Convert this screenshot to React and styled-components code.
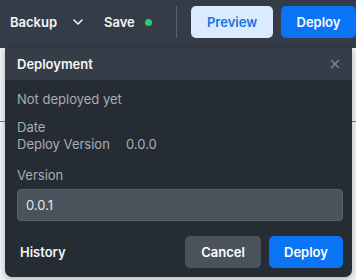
import styled, { createGlobalStyle } from "styled-components";

const Global = createGlobalStyle`
  html, body {
    margin: 0;
    padding: 0;
    width: 356px;
    height: 280px;
    overflow: hidden;
    background: #e9edf2;
    font-family: "Inter", "Liberation Sans", sans-serif;
  }
  * { box-sizing: border-box; }
`;

const Page = styled.div`
  position: relative;
  width: 356px;
  height: 280px;
  display: flex;
  flex-direction: column;
`;

const Toolbar = styled.div`
  height: 48px;
  background: #333c47;
  display: flex;
  align-items: center;
  padding: 0 1px 4px 10px;
  color: #f3f5f7;
  font-size: 13px;
  font-weight: 600;
`;

const Menu = styled.div`
  display: flex;
  align-items: center;
  gap: 16px;
  width: 94px;
  flex-shrink: 0;
`;

const Save = styled.div`
  display: flex;
  align-items: center;
  gap: 10px;
  width: 72px;
  flex-shrink: 0;
`;

const Dot = styled.span`
  width: 7px;
  height: 7px;
  border-radius: 50%;
  background: #2ecc71;
`;

const Divider = styled.div`
  width: 1px;
  height: 32px;
  background: #5b636d;
  margin-right: 14px;
  flex-shrink: 0;
`;

const Button = styled.button`
  height: 32px;
  width: ${({ $w }) => $w}px;
  flex-shrink: 0;
  border: none;
  border-radius: 5px;
  font-family: inherit;
  font-size: 13px;
  font-weight: 600;
  cursor: pointer;
  background: ${({ $kind }) =>
    $kind === "light" ? "#dbeafc" : $kind === "grey" ? "#4a525c" : "#0b74f4"};
  color: ${({ $kind }) => ($kind === "light" ? "#1673e6" : "#ffffff")};
`;

const ToolButtons = styled.div`
  display: flex;
  gap: 8px;
`;

const Content = styled.div`
  flex: 1;
  background: #eef1f5;
  display: flex;
  flex-direction: column;
`;

const TabLine = styled.div`
  margin-top: 73px;
  height: 1px;
  background: #3b82f6;
`;

const Popover = styled.div`
  position: absolute;
  left: 5px;
  top: 48px;
  width: 347px;
  height: 229px;
  background: #262c34;
  border-radius: 0 0 7px 7px;
  overflow: hidden;
  display: flex;
  flex-direction: column;
  box-shadow: 0 2px 6px rgba(0, 0, 0, 0.25);
`;

const Header = styled.div`
  height: 32px;
  background: #343d48;
  display: flex;
  align-items: center;
  justify-content: space-between;
  padding: 0 12px;
  color: #f3f5f7;
  font-size: 13px;
  font-weight: 600;
`;

const Body = styled.div`
  padding: 11px 9px 0 12px;
  display: flex;
  flex-direction: column;
  color: #a9aeb5;
  font-size: 13px;
`;

const Line = styled.div`
  height: 17px;
  line-height: 17px;
  margin-top: ${({ $mt }) => $mt || 0}px;
  display: flex;
`;

const Key = styled.span`
  width: 109px;
`;

const Input = styled.div`
  margin-top: 5px;
  height: 32px;
  border: 1px solid #59616b;
  border-radius: 4px;
  background: #4a525c;
  color: #e4e7ea;
  display: flex;
  align-items: center;
  padding: 0 8px;
`;

const Footer = styled.div`
  margin-top: 15px;
  display: flex;
  align-items: center;
  gap: 8px;
`;

const History = styled.div`
  flex: 1;
  padding-left: 3px;
  color: #f3f5f7;
  font-weight: 600;
`;

export default function App() {
  return (
    <Page>
      <Global />
      <Toolbar>
        <Menu>
          Backup
          <svg width="10" height="6" viewBox="0 0 10 6" fill="none">
            <path d="M1 1l4 4 4-4" stroke="#f3f5f7" strokeWidth="1.6" strokeLinecap="round" strokeLinejoin="round" />
          </svg>
        </Menu>
        <Save>
          Save
          <Dot />
        </Save>
        <Divider />
        <ToolButtons>
          <Button $kind="light" $w={82}>Preview</Button>
          <Button $w={75}>Deploy</Button>
        </ToolButtons>
      </Toolbar>
      <Content>
        <TabLine />
      </Content>
      <Popover>
        <Header>
          Deployment
          <svg width="10" height="10" viewBox="0 0 10 10">
            <path d="M1 1l8 8M9 1l-8 8" stroke="#7f8790" strokeWidth="1.4" />
          </svg>
        </Header>
        <Body>
          <Line>Not deployed yet</Line>
          <Line $mt={11}>Date</Line>
          <Line>
            <Key>Deploy Version</Key>0.0.0
          </Line>
          <Line $mt={14}>Version</Line>
          <Input>0.0.1</Input>
          <Footer>
            <History>History</History>
            <Button $kind="grey" $w={76}>Cancel</Button>
            <Button $w={74}>Deploy</Button>
          </Footer>
        </Body>
      </Popover>
    </Page>
  );
}
